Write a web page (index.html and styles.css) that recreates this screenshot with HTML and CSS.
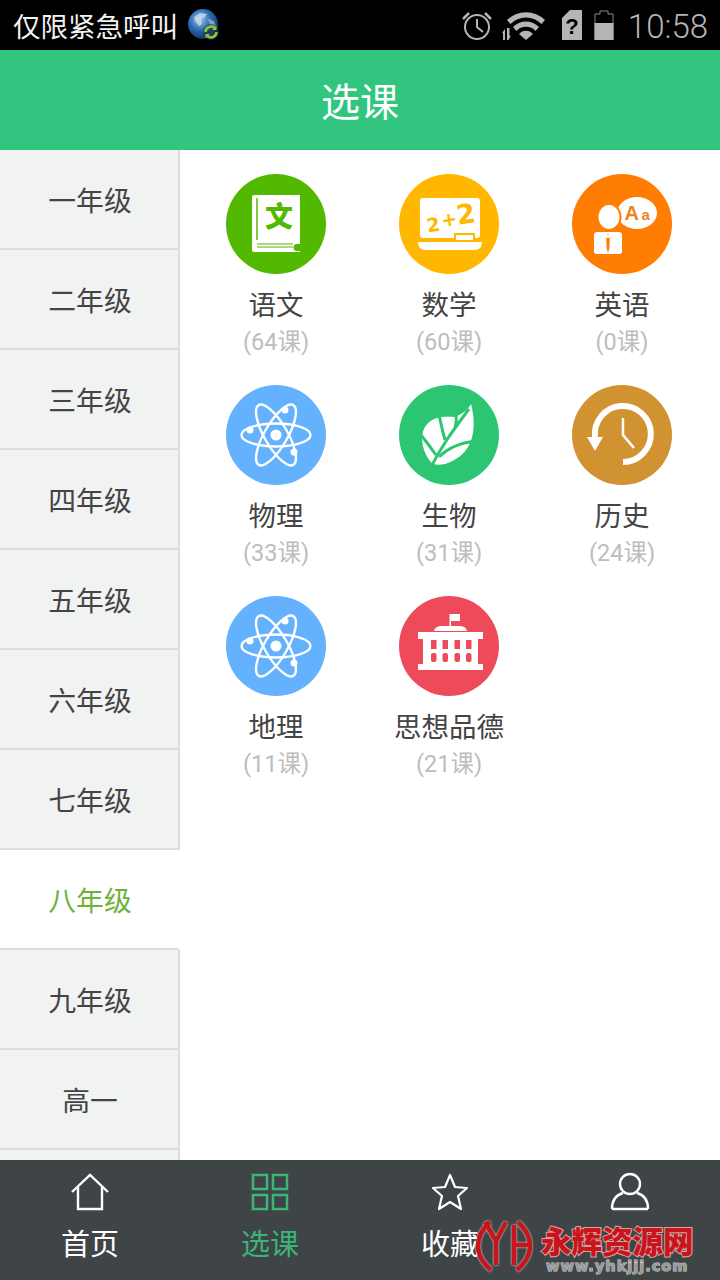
FILE: index.html
```html
<!DOCTYPE html>
<html>
<head>
<meta charset="utf-8">
<title>选课</title>
<link rel="stylesheet" href="styles.css">
</head>
<body>
<div class="screen">

<div class="status">
	<div class="status-left">
		<span class="carrier">仅限紧急呼叫</span>
		<svg class="globe" width="34" height="34" viewBox="0 0 34 34">
			<defs>
				<radialGradient id="sea" cx="40%" cy="35%" r="70%">
					<stop offset="0" stop-color="#9cc4ea"/>
					<stop offset="0.5" stop-color="#2f6cb0"/>
					<stop offset="1" stop-color="#0e2c5c"/>
				</radialGradient>
			</defs>
			<circle cx="16" cy="16" r="15" fill="url(#sea)"/>
			<path d="M7 9l6-4 7 1-3 4-3 1 1 5-3 2-4-5z" fill="#cfe0ee" opacity=".75"/>
			<path d="M21 11l6 2 2 5-5 1z" fill="#cfe0ee" opacity=".5"/>
			<circle cx="24" cy="24" r="8" fill="#1d3a4a" opacity=".6"/>
			<path d="M18.500 24a5.500 5.500 0 0 1 9.500-3.700M29.500 24a5.500 5.500 0 0 1-9.500 3.700" fill="none" stroke="#8cc63f" stroke-width="2.600"/>
			<path d="M29.500 17.500v4.500h-4.500zM18.500 30.500v-4.500h4.500z" fill="#8cc63f"/>
		</svg>
	</div>
	<div class="status-right">
		<svg width="32" height="30" viewBox="0 0 32 30" fill="none" stroke="#b5b5b5">
			<circle cx="16" cy="17" r="12" stroke-width="2"/>
			<path d="M16 9v8l6 5" stroke-width="2"/>
			<path d="M2 9l6-6M30 9l-6-6" stroke-width="2.500"/>
		</svg>
		<svg class="wifi" width="46" height="32" viewBox="0 0 46 32">
			<path d="M5 11a27 27 0 0 1 38 0l-3.500 4a22 22 0 0 0-31 0z" fill="#b5b5b5"/>
			<path d="M11 18a18 18 0 0 1 26 0l-3.500 4a13 13 0 0 0-19 0z" fill="#b5b5b5"/>
			<path d="M17 25a9 9 0 0 1 14 0l-7 6z" fill="#b5b5b5"/>
			<path d="M0 24l3-4v11h-2v-7zM5 19h2.500v8l1.500-.5-2.500 4.500h-1.500z" fill="#b5b5b5"/>
		</svg>
		<svg class="sim" width="20" height="30" viewBox="0 0 20 30">
			<path d="M8 0h12v30h-20v-22z" fill="#b5b5b5"/>
			<text x="10" y="24" class="sim-mark">?</text>
		</svg>
		<svg class="battery" width="20" height="30" viewBox="0 0 20 30">
			<path d="M1 4h5v-3h8v3h5v25h-18z" fill="none" stroke="#8a8a8a" stroke-width="1"/>
			<rect x="0.500" y="13" width="19" height="17" fill="#b5b5b5"/>
		</svg>
		<span class="clock">10:58</span>
	</div>
</div>

<div class="header">选课</div>

<div class="main">
	<ul class="grades">
		<li>一年级</li>
		<li>二年级</li>
		<li>三年级</li>
		<li>四年级</li>
		<li>五年级</li>
		<li>六年级</li>
		<li>七年级</li>
		<li class="on">八年级</li>
		<li>九年级</li>
		<li>高一</li>
		<li></li>
	</ul>

	<div class="subjects">
		<div class="subject">
			<div class="disc c-green">
				<svg width="100" height="100" viewBox="0 0 100 100">
					<path d="M28 21h46v49h-3a3.500 3.500 0 0 0 0 7h3v1h-46a2 2 0 0 1-2-2v-53a2 2 0 0 1 2-2z" fill="#fff"/>
					<path d="M31 24v42" stroke="#53b800" stroke-width="1.500"/>
					<path d="M31 70h36M31 73h36" stroke="#53b800" stroke-width="1"/>
					<text x="53" y="53" class="wen">文</text>
				</svg>
			</div>
			<div class="name">语文</div>
			<div class="count">(64课)</div>
		</div>
		<div class="subject">
			<div class="disc c-yellow">
				<svg width="100" height="100" viewBox="0 0 100 100">
					<rect x="21" y="24" width="60" height="40" rx="3" fill="#fff"/>
					<rect x="55" y="59" width="21" height="5" fill="#ffb700"/>
					<rect x="57" y="61" width="17" height="5" fill="#fff"/>
					<path d="M19 68h64q0 8-8 8h-48q-8 0-8-8z" fill="#fff"/>
					<g transform="rotate(-9 50 45)">
						<text x="27" y="55" class="sum-s">2</text>
						<text x="42" y="52" class="sum-s">+</text>
						<text x="58" y="52" class="sum-b">2</text>
					</g>
				</svg>
			</div>
			<div class="name">数学</div>
			<div class="count">(60课)</div>
		</div>
		<div class="subject">
			<div class="disc c-orange">
				<svg width="100" height="100" viewBox="0 0 100 100">
					<ellipse cx="65" cy="39" rx="20" ry="16" fill="#fff"/>
					<ellipse cx="37" cy="43" rx="11.500" ry="13" fill="#fff" stroke="#ff7d00" stroke-width="2"/>
					<rect x="22" y="58" width="28" height="22" rx="3" fill="#fff"/>
					<path d="M36 59v3M34.500 64h3l-.5 11-1 3-1-3z" fill="#ff7d00" stroke="#ff7d00" stroke-width="0.500"/>
					<text x="52.500" y="46" class="en-a">A</text>
					<text x="69.500" y="46" class="en-b">a</text>
				</svg>
			</div>
			<div class="name">英语</div>
			<div class="count">(0课)</div>
		</div>
		<div class="subject">
			<div class="disc c-blue">
				<svg width="100" height="100" viewBox="0 0 100 100">
					<g id="atom" fill="none" stroke="#fff" stroke-width="2.400">
						<ellipse cx="50" cy="50" rx="34.500" ry="11.500"/>
						<ellipse cx="50" cy="50" rx="34.500" ry="11.500" transform="rotate(60 50 50)"/>
						<ellipse cx="50" cy="50" rx="34.500" ry="11.500" transform="rotate(120 50 50)"/>
						<circle cx="50" cy="50" r="5.500" fill="#fff" stroke="none"/>
						<circle cx="24" cy="45" r="3.500" fill="#fff" stroke="none"/>
						<circle cx="59" cy="25" r="3.500" fill="#fff" stroke="none"/>
						<circle cx="68" cy="67" r="3.500" fill="#fff" stroke="none"/>
					</g>
				</svg>
			</div>
			<div class="name">物理</div>
			<div class="count">(33课)</div>
		</div>
		<div class="subject">
			<div class="disc c-leaf">
				<svg width="100" height="100" viewBox="0 0 100 100">
					<path d="M72 19C78 42 74 62 60 72 50 79 42 81 34 79 24 70 20 52 26 42 32 32 44 31 55 32 62 30 68 26 72 19z" fill="#fff"/>
					<g fill="none" stroke="#2cc672" stroke-width="3">
						<path d="M31 84C42 62 52 48 70 24"/>
						<path d="M37 70Q30 60 22 50M46 55Q43 44 40 30M56 43Q58 36 57 28"/>
						<path d="M40 72Q54 58 78 56"/>
					</g>
				</svg>
			</div>
			<div class="name">生物</div>
			<div class="count">(31课)</div>
		</div>
		<div class="subject">
			<div class="disc c-brown">
				<svg width="100" height="100" viewBox="0 0 100 100" fill="none" stroke="#fff">
					<path d="M23 52A28 28 0 1 1 51 77" stroke-width="6"/>
					<path d="M15 52h16l-8 14z" fill="#fff" stroke="none"/>
					<path d="M51 33v17l11 13" stroke-width="2.500"/>
				</svg>
			</div>
			<div class="name">历史</div>
			<div class="count">(24课)</div>
		</div>
		<div class="subject">
			<div class="disc c-blue">
				<svg width="100" height="100" viewBox="0 0 100 100">
					<use href="#atom"/>
				</svg>
			</div>
			<div class="name">地理</div>
			<div class="count">(11课)</div>
		</div>
		<div class="subject">
			<div class="disc c-red">
				<svg width="100" height="100" viewBox="0 0 100 100" fill="#fff">
					<path d="M52 18h9v7h-9zM50.500 18h1.500v13h-1.500z"/>
					<path d="M35 35q1-5 8-5h17q7 0 8 5z"/>
					<path d="M19 36h65v7h-65zM19 68h65v6h-65z"/>
					<path d="M24 43h55v25h-55z"/>
					<g fill="#ed4a5a">
						<rect x="32" y="44" width="5.500" height="9"/><rect x="43.500" y="44" width="5.500" height="9"/><rect x="55.500" y="44" width="5.500" height="9"/><rect x="67" y="44" width="5.500" height="9"/>
						<rect x="32" y="57" width="5.500" height="9" rx="2"/><rect x="43.500" y="57" width="5.500" height="9" rx="2"/><rect x="55.500" y="57" width="5.500" height="9" rx="2"/><rect x="67" y="57" width="5.500" height="9" rx="2"/>
					</g>
				</svg>
			</div>
			<div class="name">思想品德</div>
			<div class="count">(21课)</div>
		</div>
	</div>
</div>

<div class="tabs">
	<div class="tab">
		<svg width="40" height="40" viewBox="0 0 40 40" fill="none" stroke="#fff" stroke-width="2.400">
			<path d="M2 20l18-17 18 17"/>
			<path d="M8 15v22h24v-22"/>
		</svg>
		<span>首页</span>
	</div>
	<div class="tab on">
		<svg width="40" height="40" viewBox="0 0 40 40" fill="none" stroke="#39b678" stroke-width="2.500">
			<rect x="3" y="3" width="14" height="14"/>
			<rect x="23" y="3" width="14" height="14"/>
			<rect x="3" y="23" width="14" height="14"/>
			<rect x="23" y="23" width="14" height="14"/>
		</svg>
		<span>选课</span>
	</div>
	<div class="tab">
		<svg width="40" height="40" viewBox="0 0 40 40" fill="none" stroke="#fff" stroke-width="2.200" stroke-linejoin="round">
			<path d="M20 3l5 12 12 1-9 8 3 13-11-7-11 7 3-13-9-8 12-1z"/>
		</svg>
		<span>收藏</span>
	</div>
	<div class="tab">
		<svg width="40" height="40" viewBox="0 0 40 40" fill="none" stroke="#fff" stroke-width="2.400">
			<circle cx="20" cy="12" r="10"/>
			<path d="M2 37q0-13 11-16M38 37q0-13-11-16M2 37h36"/>
		</svg>
	</div>
</div>

<div class="mark">
	<svg width="56" height="54" viewBox="0 0 56 54" fill="none" stroke="#c8151c" stroke-width="4.500">
		<path d="M14 3q-12 11-12 24t13 24"/>
		<path d="M9 3l11 19 10-19M20 22v24"/>
		<path d="M42 3q12 11 12 24t-13 24"/>
		<path d="M38 6v40M38 26h14"/>
	</svg>
	<div class="mark-text">
		<b>永辉资源网</b>
		<i>www.yhkjjj.com</i>
	</div>
</div>

</div>
</body>
</html>
```

FILE: styles.css
```css
* {
	box-sizing: border-box;
}
html, body {
	margin: 0;
	padding: 0;
}
body {
	background-color: #fff;
	font-family: "Noto Sans CJK SC", "Noto Sans", sans-serif;
}
.screen {
	position: relative;
	display: flex;
	flex-direction: column;
	width: 720px;
	height: 1280px;
	overflow: hidden;
}

.status {
	display: flex;
	justify-content: space-between;
	align-items: center;
	height: 50px;
	flex: none;
	padding: 0 12px 0 13px;
	background-color: #000;
}
.status-left {
	display: flex;
	align-items: center;
	gap: 9px;
}
.carrier {
	color: #f2f2f2;
	font-size: 27.500px;
	line-height: 48px;
}
.status-right {
	display: flex;
	align-items: center;
	gap: 11px;
}
.wifi {
	margin-left: -2px;
}
.sim {
	margin-left: 3px;
}
.sim-mark {
	fill: #000;
	font: bold 22px "Liberation Sans", sans-serif;
	text-anchor: middle;
}
.battery {
	margin-left: 1px;
}
.clock {
	margin-left: 3px;
	padding-top: 3px;
	color: #b5b5b5;
	font-family: Roboto, sans-serif;
	font-size: 33px;
	font-weight: 300;
	line-height: 47px;
}

.header {
	flex: none;
	height: 100px;
	background-color: #31c580;
	color: #fff;
	font-size: 39px;
	line-height: 98px;
	text-align: center;
}

.main {
	display: flex;
	flex: 1;
	min-height: 0;
	overflow: hidden;
}
.grades {
	flex: none;
	width: 180px;
	margin: 0;
	padding: 0;
	list-style: none;
}
.grades li {
	height: 100px;
	padding-left: 2px;
	background-color: #f1f3f3;
	border-right: 2px solid #dcdedd;
	border-bottom: 2px solid #dcdedd;
	color: #444;
	font-size: 27.800px;
	line-height: 98px;
	text-align: center;
}
.grades li.on {
	background-color: #fff;
	border-right-color: #fff;
	color: #6fb23a;
}

.subjects {
	display: grid;
	grid-template-columns: repeat(3, 173px);
	grid-auto-rows: 211px;
	flex: 1;
	padding: 24px 0 0 9.500px;
}
.subject {
	display: flex;
	flex-direction: column;
	align-items: center;
}
.disc {
	width: 100px;
	height: 100px;
	border-radius: 50%;
}
.disc svg {
	display: block;
}
.c-green { background-color: #53b800; }
.c-yellow { background-color: #ffb700; }
.c-orange { background-color: #ff7d00; }
.c-blue { background-color: #64b1fd; }
.c-leaf { background-color: #2cc672; }
.c-brown { background-color: #d19231; }
.c-red { background-color: #ed4a5a; }
.wen {
	fill: #53b800;
	font-family: "Noto Sans CJK SC", sans-serif;
	font-size: 28px;
	font-weight: 900;
	text-anchor: middle;
}
.sum-s {
	fill: #ffb700;
	font: bold 19px "DejaVu Sans", sans-serif;
}
.sum-b {
	fill: #ffb700;
	font: bold 27px "DejaVu Sans", sans-serif;
}
.en-a {
	fill: #e8851e;
	font: bold 20px "Liberation Sans", sans-serif;
}
.en-b {
	fill: #e8851e;
	font: bold 15px "Liberation Sans", sans-serif;
}
.name {
	margin-top: 10px;
	color: #444;
	font-size: 27.500px;
	line-height: 38px;
}
.count {
	margin-top: 2px;
	color: #bdbdbd;
	font-family: Roboto, "Noto Sans CJK SC", sans-serif;
	font-size: 23.500px;
	line-height: 36px;
}

.tabs {
	display: flex;
	flex: none;
	height: 120px;
	background-color: #3f4447;
}
.tab {
	display: flex;
	flex-direction: column;
	align-items: center;
	flex: 1;
	padding-top: 12px;
	color: #fff;
	font-size: 29px;
}
.tab svg {
	display: block;
}
.tab span {
	margin-top: 9px;
	line-height: 42px;
}
.tab.on {
	color: #39b678;
}

/* site watermark over the tab bar */
.mark {
	position: absolute;
	left: 476px;
	top: 1219px;
	display: flex;
	align-items: flex-start;
	gap: 9px;
}
.mark svg {
	filter: drop-shadow(0 0 1px #eee);
}
.mark-text {
	display: flex;
	flex-direction: column;
	align-items: center;
	padding-top: 4px;
}
.mark-text b {
	color: #c8151c;
	font-size: 30.500px;
	font-weight: 900;
	line-height: 34px;
	-webkit-text-stroke: 2px #d9a3a5;
	paint-order: stroke fill;
}
.mark-text i {
	margin-top: 3px;
	color: #999;
	font-family: "DejaVu Sans", sans-serif;
	font-size: 14.500px;
	font-style: normal;
	font-weight: bold;
	letter-spacing: 1px;
	line-height: 12px;
	-webkit-text-stroke: 1px #ccc;
	paint-order: stroke fill;
}
```
